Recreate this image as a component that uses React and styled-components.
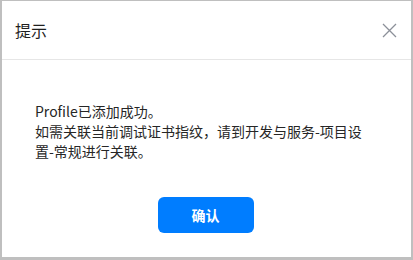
import React from "react";
import styled, { createGlobalStyle } from "styled-components";

const Global = createGlobalStyle`
  html, body { margin: 0; padding: 0; background: #ffffff; }
  body { font-family: "Noto Sans", "Noto Sans CJK SC", sans-serif; }
`;

const Dialog = styled.div`
  box-sizing: border-box;
  width: 413px;
  height: 260px;
  background: #ffffff;
  border-style: solid;
  border-color: #bfbfbf;
  border-width: 1px 2px 3px 2px;
  display: flex;
  flex-direction: column;
`;

const Header = styled.div`
  height: 58px;
  display: flex;
  align-items: center;
  justify-content: space-between;
  padding: 0 14px 0 13px;
  border-bottom: 1px solid #e6e6e6;
`;

const Title = styled.div`
  font-family: "Noto Sans CJK SC", sans-serif;
  font-size: 16px;
  color: #1f1f1f;
  line-height: 20px;
`;

const Close = styled.button`
  border: 0;
  background: none;
  padding: 0;
  width: 16px;
  height: 16px;
  display: flex;
  align-items: center;
  justify-content: center;
  cursor: pointer;
`;

const Body = styled.div`
  flex: 1;
  display: flex;
  flex-direction: column;
  padding: 41px 0 0 33px;
`;

const Message = styled.p`
  margin: 0;
  width: 328px;
  line-break: anywhere;
  font-family: "Noto Sans CJK SC", sans-serif;
  font-size: 14px;
  line-height: 20px;
  color: #262626;
`;

const Footer = styled.div`
  display: flex;
  justify-content: center;
  padding: 36px 0 24px;
  margin-left: -33px;
`;

const Button = styled.button`
  width: 96px;
  height: 36px;
  border: 0;
  border-radius: 6px;
  background: #007dff;
  color: #ffffff;
  font-family: "Noto Sans CJK SC", sans-serif;
  font-size: 14px;
  font-weight: 700;
  cursor: pointer;
  margin-left: -2px;
`;

export default function App() {
  return (
    <>
      <Global />
      <Dialog>
        <Header>
          <Title>提示</Title>
          <Close aria-label="close">
            <svg width="15" height="15" viewBox="0 0 15 15">
              <path d="M1 1 L14 14 M14 1 L1 14" stroke="#8c9099" strokeWidth="1.3" fill="none" />
            </svg>
          </Close>
        </Header>
        <Body>
          <Message>
            Profile已添加成功。
            <br />
            如需关联当前调试证书指纹，请到开发与服务-项目设置-常规进行关联。
          </Message>
          <Footer>
            <Button>确认</Button>
          </Footer>
        </Body>
      </Dialog>
    </>
  );
}
